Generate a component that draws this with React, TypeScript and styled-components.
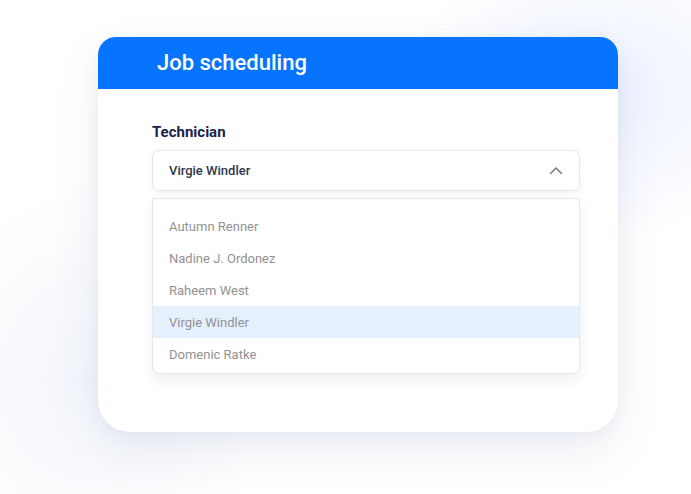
import React from "react";
import styled, { createGlobalStyle } from "styled-components";

const Global = createGlobalStyle`
  html, body { margin: 0; padding: 0; }
  body {
    width: 691px;
    height: 494px;
    overflow: hidden;
    font-family: Roboto, "Noto Sans", sans-serif;
    background:
      radial-gradient(ellipse 200px 150px at 600px 90px, rgba(228, 236, 255, 0.7), rgba(255,255,255,0) 100%),
      radial-gradient(ellipse 180px 200px at 90px 380px, rgba(236, 240, 248, 0.6), rgba(255,255,255,0) 100%),
      #ffffff;
  }
`;

const Page = styled.div`
  width: 691px;
  height: 494px;
  box-sizing: border-box;
  padding: 37px 0 0 98px;
`;

const Card = styled.div`
  width: 520px;
  height: 395px;
  background: #ffffff;
  border-radius: 18px 18px 32px 32px;
  overflow: hidden;
  box-shadow: 0 20px 50px rgba(60, 80, 130, 0.09), 0 4px 18px rgba(60, 80, 130, 0.05);
  display: flex;
  flex-direction: column;
`;

const Header = styled.div`
  height: 52px;
  background: #0674ff;
  display: flex;
  align-items: center;
  padding-left: 59px;
  box-sizing: border-box;
`;

const Title = styled.h1`
  margin: 0;
  color: #ffffff;
  font-family: Roboto, sans-serif;
  font-weight: 500;
  font-size: 22px;
  padding-bottom: 1px;
`;

const Body = styled.div`
  padding: 34px 38px 0 54px;
  display: flex;
  flex-direction: column;
`;

const Label = styled.div`
  font-size: 15px;
  font-weight: 700;
  color: #1b2347;
  line-height: 18px;
  margin-bottom: 9px;
`;

const Select = styled.div`
  height: 41px;
  box-sizing: border-box;
  border: 1px solid #e6e7ec;
  border-radius: 7px;
  display: flex;
  align-items: center;
  justify-content: space-between;
  padding: 0 16px 0 16px;
  box-shadow: 0 2px 6px rgba(40, 50, 80, 0.07);
  background: #fff;
`;

const SelectedText = styled.span`
  font-size: 13px;
  font-weight: 500;
  color: #2c3a4d;
`;

const List = styled.div`
  margin-top: 7px;
  border: 1px solid #e6e7ec;
  border-radius: 0 0 7px 7px;
  padding: 11px 0 3px;
  background: #fff;
  box-shadow: 0 6px 14px rgba(40, 50, 80, 0.08);
`;

const Item = styled.div<{ $active?: boolean }>`
  height: 32px;
  display: flex;
  align-items: center;
  padding-left: 16px;
  font-size: 13px;
  font-weight: 400;
  color: #929294;
  background: ${(p) => (p.$active ? "#e5f0fd" : "transparent")};
`;

const Chevron = () => (
  <svg width="14" height="9" viewBox="0 0 14 9" fill="none">
    <path d="M1.5 7.5 L7 2 L12.5 7.5" stroke="#7a7c80" strokeWidth="1.6" strokeLinecap="round" strokeLinejoin="round" />
  </svg>
);

const names = ["Autumn Renner", "Nadine J. Ordonez", "Raheem West", "Virgie Windler", "Domenic Ratke"];

export default function App() {
  return (
    <>
      <Global />
      <Page>
        <Card>
          <Header>
            <Title>Job scheduling</Title>
          </Header>
          <Body>
            <Label>Technician</Label>
            <Select>
              <SelectedText>Virgie Windler</SelectedText>
              <Chevron />
            </Select>
            <List>
              {names.map((n) => (
                <Item key={n} $active={n === "Virgie Windler"}>
                  {n}
                </Item>
              ))}
            </List>
          </Body>
        </Card>
      </Page>
    </>
  );
}
